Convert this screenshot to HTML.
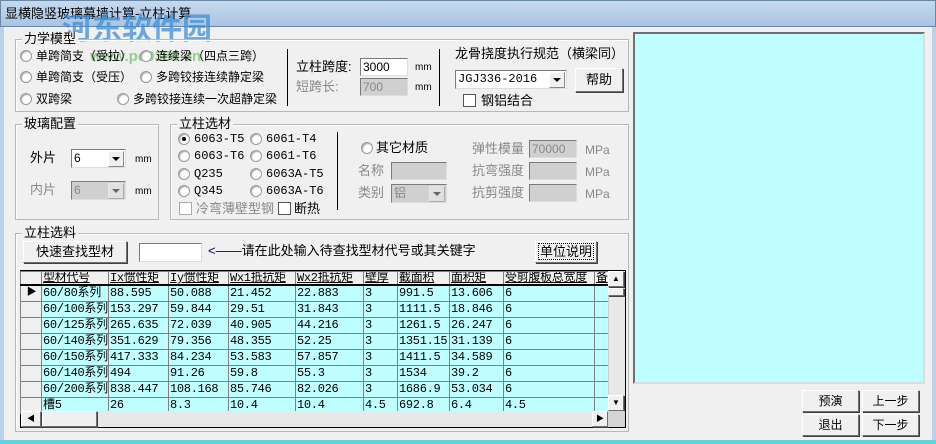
<!DOCTYPE html>
<html><head><meta charset="utf-8"><style>
*{margin:0;padding:0;box-sizing:border-box}
body{width:936px;height:444px;overflow:hidden;background:#f0f0f0;font-family:"Liberation Sans","Noto Sans CJK SC",sans-serif;font-size:12px;color:#000;position:relative}
.a{position:absolute;white-space:nowrap;line-height:14px}
.g{position:absolute;border:1px solid #b8b8b8;box-shadow:inset 1px 1px 0 #fff}
.gt{position:absolute;background:#f0f0f0;padding:0 2px;font-size:13px;line-height:14px}
.r{position:absolute;width:12px;height:12px;border-radius:50%;border:1px solid #9a9a9a;background:#fff;box-shadow:inset 1px 1px 1px #aaa}
.cb{position:absolute;width:13px;height:13px;border:1px solid #555;background:#fff}
.in{position:absolute;background:#fff;border:1px solid #7a7a7a;border-right-color:#ddd;border-bottom-color:#ddd;padding-left:2px;line-height:16px}
.dis{background:#d0d0d0;color:#888}
.btn{position:absolute;border:1px solid #707070;border-top-color:#fff;border-left-color:#fff;box-shadow:1px 1px 0 #404040;background:#f0f0f0;text-align:center}
.gray{color:#888}
.dd{position:absolute;width:16px;height:16px;right:1px;top:1px;background:#f0f0f0;border:1px solid #888;border-top-color:#fff;border-left-color:#fff}
.dd:after{content:"";position:absolute;left:3px;top:5px;border:4px solid transparent;border-top:4px solid #000;border-bottom:0}
table{border-collapse:collapse;table-layout:fixed;width:592px;position:absolute;left:20px;top:271px;font-size:12px;font-family:"Liberation Mono","Noto Sans CJK SC",monospace}
td{border:1px solid #808080;height:16px;padding:0 0 0 1px;line-height:13px;white-space:nowrap;overflow:hidden;background:#c0ffff;letter-spacing:-0.3px}
tr.h td{background:#f0f0f0;border-bottom:2px solid #000;text-decoration:underline;height:13px;line-height:12px}
td.f{background:#f0f0f0}
.t{font-size:12px}
</style></head><body>
<div class="a" style="left:0;top:0;width:936px;height:27px;background:linear-gradient(#c6d9ee,#a9c4e2);border:1px solid #6b87a6"></div>
<div class="a" style="left:5px;top:7px;font-size:13px">显横隐竖玻璃幕墙计算-立柱计算</div>
<div class="a" style="left:0;top:27px;width:4px;height:417px;background:#b9d1ea"></div>
<div class="a" style="left:932px;top:27px;width:4px;height:417px;background:#b9d1ea"></div>
<div class="a" style="left:0;top:440px;width:936px;height:4px;background:#5fd3df"></div>
<div class="a" style="left:62px;top:12px;font-size:30px;line-height:36px;color:#3e8fd8;font-weight:bold;opacity:.75">河东软件园</div>
<div class="a" style="left:90px;top:50px;font-size:15px;color:#4bb040;font-weight:bold;opacity:.55">www.pc0359.cn</div>

<div class="g" style="left:15px;top:39px;width:614px;height:73px"></div>
<div class="gt" style="left:22px;top:32px">力学模型</div>
<div class="r" style="left:20px;top:50px"></div><div class="a t" style="left:36px;top:49px">单跨简支（受拉）</div>
<div class="r" style="left:140px;top:50px"></div><div class="a t" style="left:156px;top:49px">连续梁（四点三跨）</div>
<div class="r" style="left:20px;top:71px"></div><div class="a t" style="left:36px;top:70px">单跨简支（受压）</div>
<div class="r" style="left:140px;top:71px"></div><div class="a t" style="left:156px;top:70px">多跨铰接连续静定梁</div>
<div class="r" style="left:20px;top:93px"></div><div class="a t" style="left:36px;top:92px">双跨梁</div>
<div class="r" style="left:117px;top:93px"></div><div class="a t" style="left:133px;top:92px">多跨铰接连续一次超静定梁</div>
<div class="a" style="left:287px;top:49px;width:1px;height:57px;background:#000"></div>
<div class="a" style="left:296px;top:60px;font-size:13px">立柱跨度:</div>
<div class="in" style="left:360px;top:58px;width:48px;height:18px">3000</div>
<div class="a" style="left:415px;top:61px;font-size:10px">mm</div>
<div class="a gray" style="left:296px;top:80px;font-size:13px">短跨长:</div>
<div class="in dis" style="left:360px;top:78px;width:48px;height:18px">700</div>
<div class="a" style="left:415px;top:81px;font-size:10px">mm</div>
<div class="a" style="left:439px;top:49px;width:1px;height:57px;background:#000"></div>
<div class="a" style="left:455px;top:47px;font-size:13px">龙骨挠度执行规范（横梁同）</div>
<div class="in" style="left:455px;top:70px;width:112px;height:19px;font-family:'Liberation Mono',monospace">JGJ336-2016<div class="dd"></div></div>
<div class="btn" style="left:575px;top:68px;width:48px;height:24px;line-height:22px;font-size:13px">帮助</div>
<div class="cb" style="left:463px;top:94px"></div><div class="a" style="left:481px;top:94px;font-size:13px">钢铝结合</div>

<div class="g" style="left:15px;top:124px;width:144px;height:96px"></div>
<div class="gt" style="left:22px;top:117px">玻璃配置</div>
<div class="a" style="left:30px;top:151px;font-size:13px">外片</div>
<div class="in" style="left:71px;top:149px;width:55px;height:19px">6<div class="dd"></div></div>
<div class="a" style="left:135px;top:153px;font-size:10px">mm</div>
<div class="a gray" style="left:30px;top:183px;font-size:13px">内片</div>
<div class="in dis" style="left:71px;top:181px;width:55px;height:19px">6<div class="dd" style="opacity:.5"></div></div>
<div class="a" style="left:135px;top:185px;font-size:10px">mm</div>

<div class="g" style="left:170px;top:124px;width:459px;height:96px"></div>
<div class="gt" style="left:177px;top:117px">立柱选材</div>
<div style="font-family:'Liberation Mono',monospace">
<div class="r" style="left:178px;top:133px"></div><div class="a" style="left:194px;top:132px">6063-T5</div>
<div class="r" style="left:250px;top:133px"></div><div class="a" style="left:266px;top:132px">6061-T4</div>
<div class="r" style="left:178px;top:150px"></div><div class="a" style="left:194px;top:149px">6063-T6</div>
<div class="r" style="left:250px;top:150px"></div><div class="a" style="left:266px;top:149px">6061-T6</div>
<div class="r" style="left:178px;top:168px"></div><div class="a" style="left:194px;top:167px">Q235</div>
<div class="r" style="left:250px;top:168px"></div><div class="a" style="left:266px;top:167px">6063A-T5</div>
<div class="r" style="left:178px;top:185px"></div><div class="a" style="left:194px;top:184px">Q345</div>
<div class="r" style="left:250px;top:185px"></div><div class="a" style="left:266px;top:184px">6063A-T6</div>
</div>
<div class="a" style="left:182px;top:137px;width:4px;height:4px;border-radius:50%;background:#000"></div>
<div class="cb" style="left:179px;top:202px;border-color:#aaa"></div><div class="a gray" style="left:196px;top:202px;font-size:13px">冷弯薄壁型钢</div>
<div class="cb" style="left:278px;top:202px"></div><div class="a" style="left:294px;top:202px;font-size:13px">断热</div>
<div class="a" style="left:337px;top:132px;width:1px;height:78px;background:#000"></div>
<div class="r" style="left:361px;top:142px"></div><div class="a" style="left:376px;top:141px;font-size:13px">其它材质</div>
<div class="a gray" style="left:358px;top:164px;font-size:13px">名称</div>
<div class="in dis" style="left:391px;top:162px;width:56px;height:18px"></div>
<div class="a gray" style="left:358px;top:186px;font-size:13px">类别</div>
<div class="in dis" style="left:391px;top:184px;width:56px;height:19px">铝<div class="dd" style="opacity:.5"></div></div>
<div class="a gray" style="left:472px;top:142px;font-size:13px">弹性模量</div>
<div class="in dis" style="left:529px;top:140px;width:48px;height:18px">70000</div>
<div class="a gray" style="left:585px;top:143px">MPa</div>
<div class="a gray" style="left:472px;top:164px;font-size:13px">抗弯强度</div>
<div class="in dis" style="left:529px;top:162px;width:48px;height:18px"></div>
<div class="a gray" style="left:585px;top:165px">MPa</div>
<div class="a gray" style="left:472px;top:186px;font-size:13px">抗剪强度</div>
<div class="in dis" style="left:529px;top:184px;width:48px;height:18px"></div>
<div class="a gray" style="left:585px;top:187px">MPa</div>

<div class="g" style="left:15px;top:233px;width:614px;height:199px"></div>
<div class="gt" style="left:22px;top:226px">立柱选料</div>
<div class="btn" style="left:23px;top:241px;width:104px;height:22px;line-height:20px;font-size:13px">快速查找型材</div>
<div class="in" style="left:139px;top:243px;width:63px;height:19px"></div>
<div class="a" style="left:208px;top:244px;font-size:13px"><span style="color:#000080">&lt;——</span>请在此处输入待查找型材代号或其关键字</div>
<div class="btn" style="left:535px;top:241px;width:62px;height:22px;line-height:20px;font-size:13px"><span style="outline:1px dotted #000;padding:0 1px">单位说明</span></div>

<div class="a" style="left:20px;top:270px;width:606px;height:158px;border:1px solid #000;background:#f0f0f0;overflow:hidden"></div>
<table>
<colgroup><col style="width:21px"><col style="width:67px"><col style="width:60px"><col style="width:60px"><col style="width:67px"><col style="width:68px"><col style="width:34px"><col style="width:52px"><col style="width:54px"><col style="width:91px"><col style="width:18px"></colgroup>
<tr class="h"><td class="f" style="text-decoration:none"></td><td>型材代号</td><td>Ix惯性矩</td><td>Iy惯性矩</td><td>Wx1抵抗矩</td><td>Wx2抵抗矩</td><td>壁厚</td><td>截面积</td><td>面积矩</td><td>受剪腹板总宽度</td><td>备</td></tr>
<tr><td class="f" style="text-align:center;font-size:10px">▶</td><td>60/80系列</td><td>88.595</td><td>50.088</td><td>21.452</td><td>22.883</td><td>3</td><td>991.5</td><td>13.606</td><td>6</td><td></td></tr>
<tr><td class="f"></td><td>60/100系列</td><td>153.297</td><td>59.844</td><td>29.51</td><td>31.843</td><td>3</td><td>1111.5</td><td>18.846</td><td>6</td><td></td></tr>
<tr><td class="f"></td><td>60/125系列</td><td>265.635</td><td>72.039</td><td>40.905</td><td>44.216</td><td>3</td><td>1261.5</td><td>26.247</td><td>6</td><td></td></tr>
<tr><td class="f"></td><td>60/140系列</td><td>351.629</td><td>79.356</td><td>48.355</td><td>52.25</td><td>3</td><td>1351.15</td><td>31.139</td><td>6</td><td></td></tr>
<tr><td class="f"></td><td>60/150系列</td><td>417.333</td><td>84.234</td><td>53.583</td><td>57.857</td><td>3</td><td>1411.5</td><td>34.589</td><td>6</td><td></td></tr>
<tr><td class="f"></td><td>60/140系列</td><td>494</td><td>91.26</td><td>59.8</td><td>55.3</td><td>3</td><td>1534</td><td>39.2</td><td>6</td><td></td></tr>
<tr><td class="f"></td><td>60/200系列</td><td>838.447</td><td>108.168</td><td>85.746</td><td>82.026</td><td>3</td><td>1686.9</td><td>53.034</td><td>6</td><td></td></tr>
<tr><td class="f"></td><td>槽5</td><td>26</td><td>8.3</td><td>10.4</td><td>10.4</td><td>4.5</td><td>692.8</td><td>6.4</td><td>4.5</td><td></td></tr>
</table>
<div class="a" style="left:608px;top:271px;width:17px;height:140px;background:#e8e8e8;border-left:1px solid #ccc"></div>
<div class="btn" style="left:608px;top:271px;width:16px;height:16px;font-size:8px;line-height:14px">▲</div>
<div class="btn" style="left:608px;top:288px;width:16px;height:8px"></div>
<div class="btn" style="left:608px;top:395px;width:16px;height:16px;font-size:8px;line-height:14px">▼</div>
<div class="a" style="left:21px;top:411px;width:587px;height:16px;background:#e8e8e8"></div>
<div class="btn" style="left:21px;top:411px;width:20px;height:16px;font-size:8px;line-height:14px">◀</div>
<div class="btn" style="left:42px;top:411px;width:55px;height:16px"></div>
<div class="btn" style="left:592px;top:411px;width:16px;height:16px;font-size:8px;line-height:14px">▶</div>
<div class="a" style="left:608px;top:411px;width:17px;height:16px;background:#d4d4d4"></div>

<div class="a" style="left:633px;top:32px;width:292px;height:352px;border:2px solid #707070;border-right-color:#ddd;border-bottom-color:#ddd;background:#c0ffff"></div>
<div class="btn" style="left:802px;top:390px;width:57px;height:22px;line-height:20px">预演</div>
<div class="btn" style="left:862px;top:390px;width:57px;height:22px;line-height:20px">上一步</div>
<div class="btn" style="left:802px;top:414px;width:57px;height:22px;line-height:20px">退出</div>
<div class="btn" style="left:862px;top:414px;width:57px;height:22px;line-height:20px">下一步</div>
</body></html>
